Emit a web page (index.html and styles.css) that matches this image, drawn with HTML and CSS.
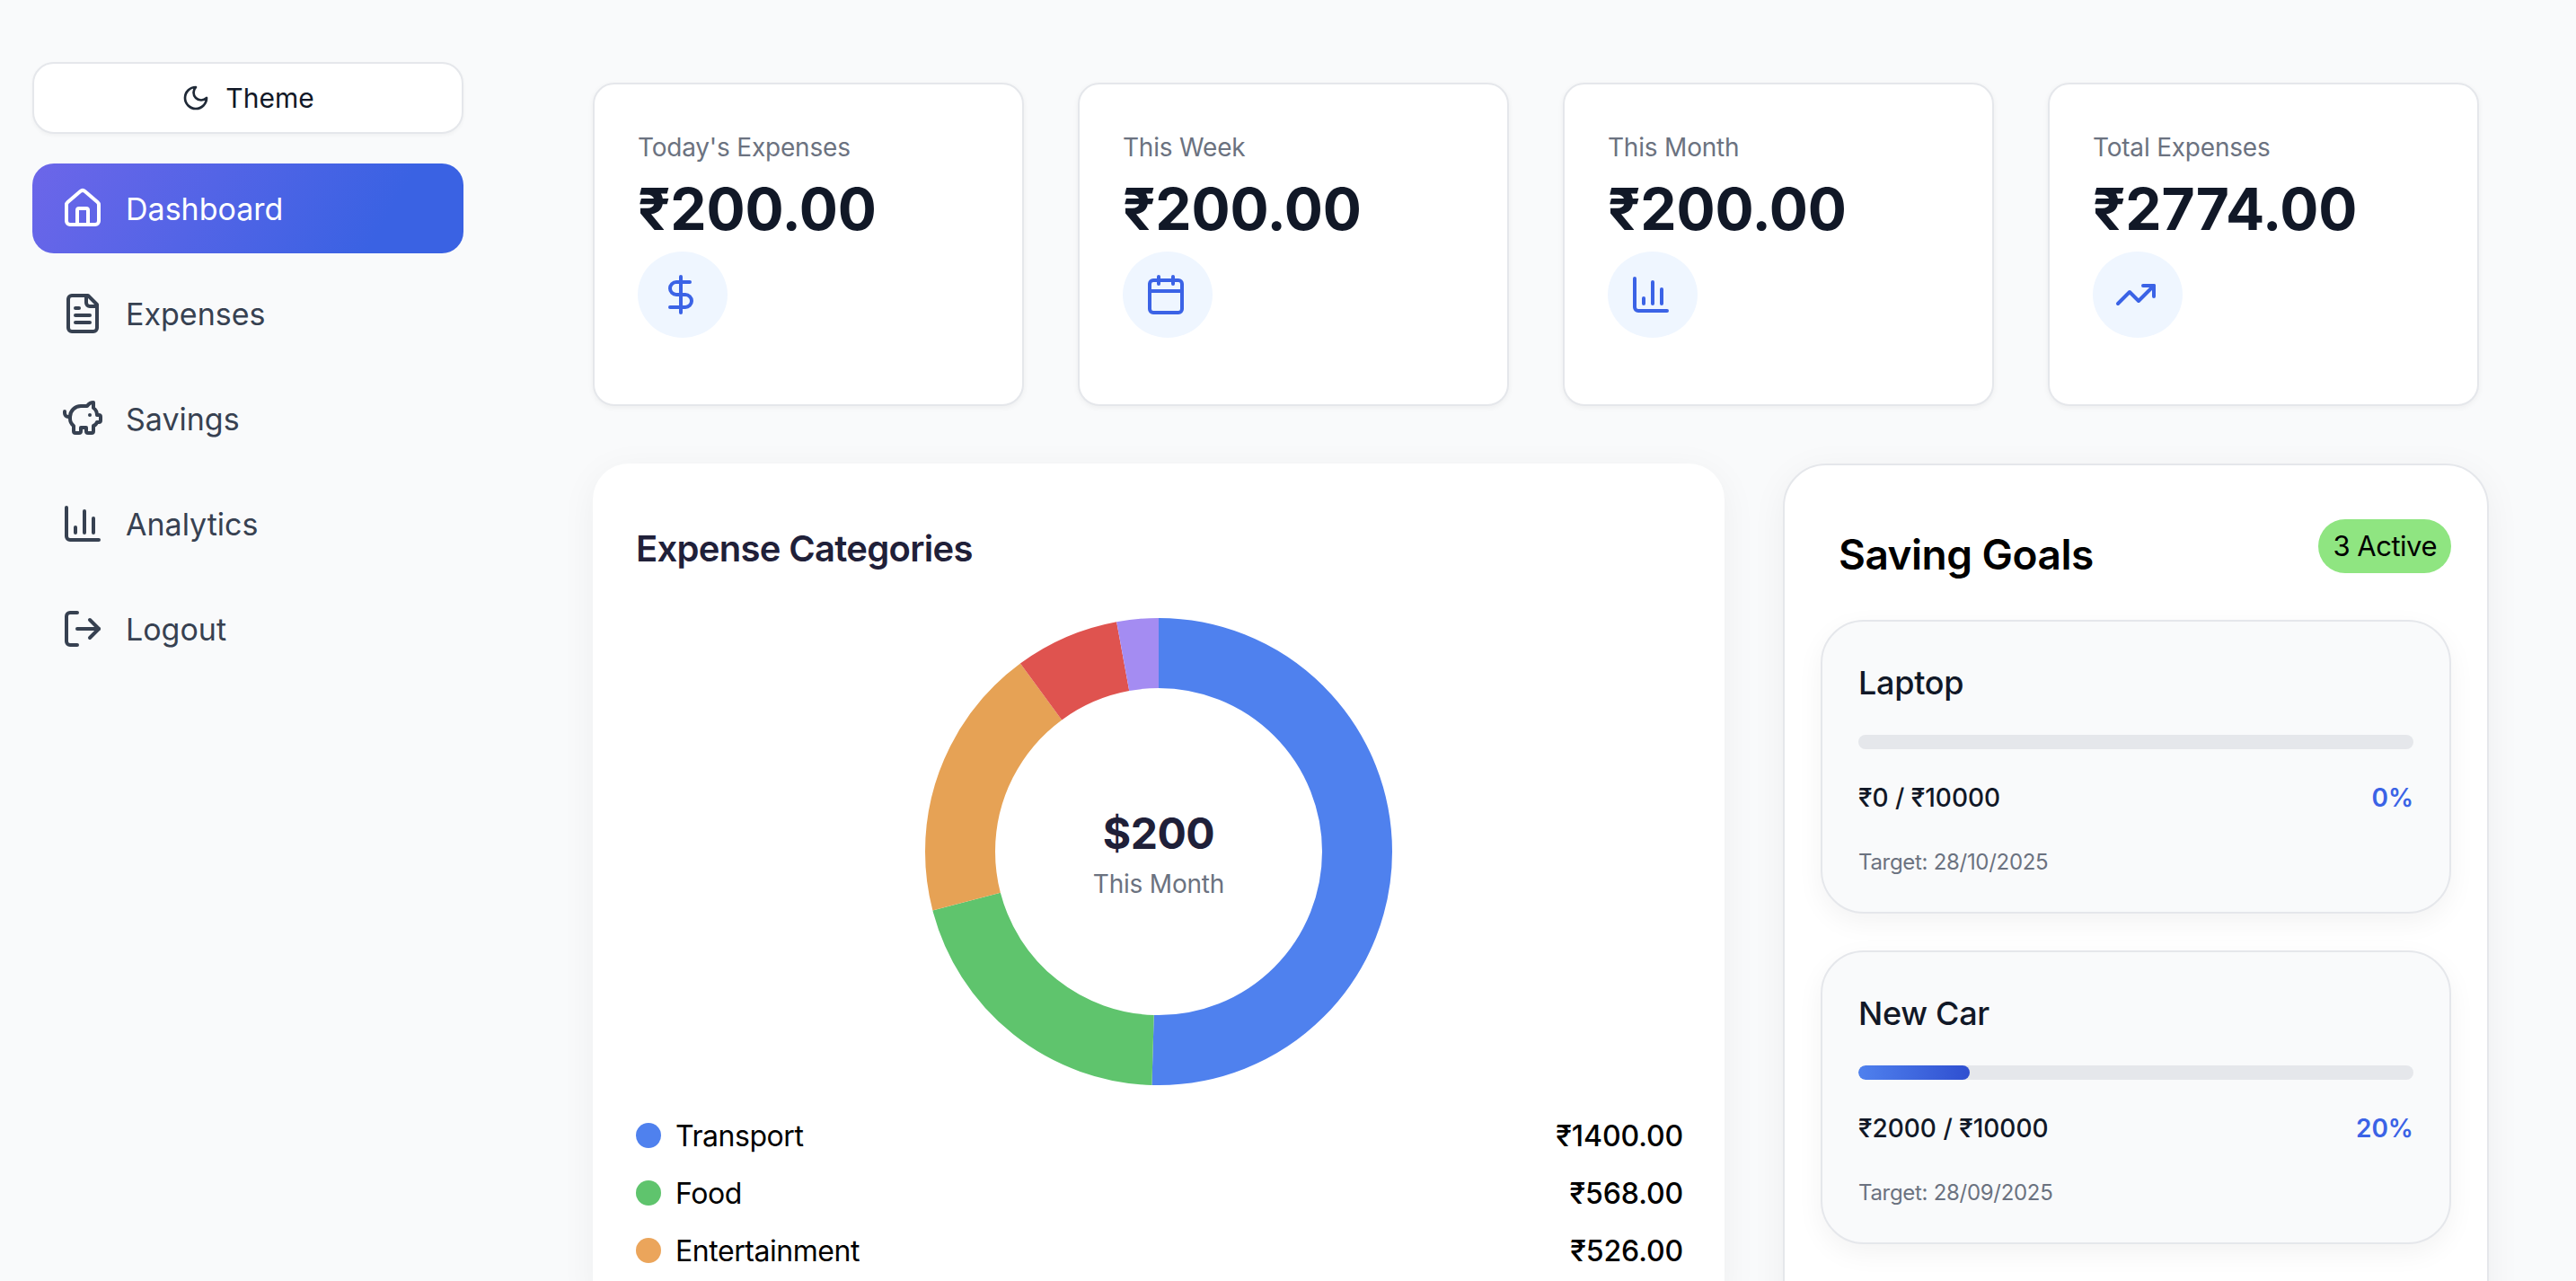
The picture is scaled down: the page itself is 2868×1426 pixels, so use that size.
FILE: index.html
```html
<!DOCTYPE html>
<html lang="en">
<head>
    <meta charset="UTF-8">
    <meta name="viewport" content="width=device-width, initial-scale=1.0">
    <title>Dashboard</title>
    <link rel="stylesheet" href="styles.css">
</head>
<body>
    <!-- Sidebar -->
    <aside class="sidebar">
        <button class="theme-button" type="button">
            <svg class="icon icon-small" viewBox="0 0 24 24"><path d="M12 3a6 6 0 0 0 9 9 9 9 0 1 1-9-9Z"/></svg>
            Theme
        </button>
        <nav class="nav">
            <a class="nav-link active" href="#">
                <svg class="icon" viewBox="0 0 24 24"><path d="M15 21v-8a1 1 0 0 0-1-1h-4a1 1 0 0 0-1 1v8"/><path d="M3 10a2 2 0 0 1 .709-1.528l7-5.999a2 2 0 0 1 2.582 0l7 5.999A2 2 0 0 1 21 10v9a2 2 0 0 1-2 2H5a2 2 0 0 1-2-2z"/></svg>
                Dashboard
            </a>
            <a class="nav-link" href="#">
                <svg class="icon" viewBox="0 0 24 24"><path d="M15 2H6a2 2 0 0 0-2 2v16a2 2 0 0 0 2 2h12a2 2 0 0 0 2-2V7Z"/><path d="M14 2v4a2 2 0 0 0 2 2h4"/><path d="M10 9H8"/><path d="M16 13H8"/><path d="M16 17H8"/></svg>
                Expenses
            </a>
            <a class="nav-link" href="#">
                <svg class="icon" viewBox="0 0 24 24"><path d="M11 17h3v2a1 1 0 0 0 1 1h2a1 1 0 0 0 1-1v-3a3.16 3.16 0 0 0 2-2h1a1 1 0 0 0 1-1v-2a1 1 0 0 0-1-1h-1a5 5 0 0 0-2-4V3a4 4 0 0 0-3.2 1.6l-.3.4H11a6 6 0 0 0-6 6v1a5 5 0 0 0 2 4v3a1 1 0 0 0 1 1h2a1 1 0 0 0 1-1z"/><path d="M16 10h.01"/><path d="M2 8v1a2 2 0 0 0 2 2h1"/></svg>
                Savings
            </a>
            <a class="nav-link" href="#">
                <svg class="icon" viewBox="0 0 24 24"><path d="M3 3v16a2 2 0 0 0 2 2h16"/><path d="M18 17V9"/><path d="M13 17V5"/><path d="M8 17v-3"/></svg>
                Analytics
            </a>
            <a class="nav-link" href="#">
                <svg class="icon" viewBox="0 0 24 24"><path d="m16 17 5-5-5-5"/><path d="M21 12H9"/><path d="M9 21H5a2 2 0 0 1-2-2V5a2 2 0 0 1 2-2h4"/></svg>
                Logout
            </a>
        </nav>
    </aside>

    <main class="main">
        <!-- Stat cards -->
        <section class="stats">
            <div class="stat-card">
                <p class="stat-label">Today's Expenses</p>
                <p class="stat-value">₹200.00</p>
                <div class="stat-icon">
                    <svg class="icon" viewBox="0 0 24 24"><path d="M12 2v20"/><path d="M17 5H9.5a3.5 3.5 0 0 0 0 7h5a3.5 3.5 0 0 1 0 7H6"/></svg>
                </div>
            </div>
            <div class="stat-card">
                <p class="stat-label">This Week</p>
                <p class="stat-value">₹200.00</p>
                <div class="stat-icon">
                    <svg class="icon" viewBox="0 0 24 24"><path d="M8 2v4"/><path d="M16 2v4"/><rect x="3" y="4" width="18" height="18" rx="2"/><path d="M3 10h18"/></svg>
                </div>
            </div>
            <div class="stat-card">
                <p class="stat-label">This Month</p>
                <p class="stat-value">₹200.00</p>
                <div class="stat-icon">
                    <svg class="icon" viewBox="0 0 24 24"><path d="M3 3v16a2 2 0 0 0 2 2h16"/><path d="M18 17V9"/><path d="M13 17V5"/><path d="M8 17v-3"/></svg>
                </div>
            </div>
            <div class="stat-card">
                <p class="stat-label">Total Expenses</p>
                <p class="stat-value">₹2774.00</p>
                <div class="stat-icon">
                    <svg class="icon" viewBox="0 0 24 24"><path d="M22 7l-8.5 8.5-5-5L2 17"/><path d="M16 7h6v6"/></svg>
                </div>
            </div>
        </section>

        <section class="panels">
            <!-- Expense categories -->
            <div class="panel categories">
                <h2 class="categories-title">Expense Categories</h2>
                <div class="donut">
                    <svg class="donut-chart" viewBox="0 0 520 520">
                        <circle class="slice slice-blue" cx="260" cy="260" r="221" pathLength="2774" stroke-dasharray="1400 2774" stroke-dashoffset="0"/>
                        <circle class="slice slice-green" cx="260" cy="260" r="221" pathLength="2774" stroke-dasharray="568 2774" stroke-dashoffset="-1400"/>
                        <circle class="slice slice-orange" cx="260" cy="260" r="221" pathLength="2774" stroke-dasharray="526 2774" stroke-dashoffset="-1968"/>
                        <circle class="slice slice-red" cx="260" cy="260" r="221" pathLength="2774" stroke-dasharray="200 2774" stroke-dashoffset="-2494"/>
                        <circle class="slice slice-purple" cx="260" cy="260" r="221" pathLength="2774" stroke-dasharray="80 2774" stroke-dashoffset="-2694"/>
                    </svg>
                    <div class="donut-center">
                        <div class="donut-amount">$200</div>
                        <div class="donut-label">This Month</div>
                    </div>
                </div>
                <ul class="legend">
                    <li class="legend-row">
                        <span class="legend-name"><span class="dot dot-blue"></span>Transport</span>
                        <span class="legend-amount">₹1400.00</span>
                    </li>
                    <li class="legend-row">
                        <span class="legend-name"><span class="dot dot-green"></span>Food</span>
                        <span class="legend-amount">₹568.00</span>
                    </li>
                    <li class="legend-row">
                        <span class="legend-name"><span class="dot dot-orange"></span>Entertainment</span>
                        <span class="legend-amount">₹526.00</span>
                    </li>
                </ul>
            </div>

            <!-- Saving goals -->
            <div class="panel goals">
                <div class="goals-header">
                    <h2 class="goals-title">Saving Goals</h2>
                    <span class="badge">3 Active</span>
                </div>
                <div class="goal-card">
                    <h3 class="goal-name">Laptop</h3>
                    <div class="progress"><div class="progress-fill" style="width: 0%"></div></div>
                    <div class="goal-row">
                        <span>₹0 / ₹10000</span>
                        <span class="goal-percent">0%</span>
                    </div>
                    <p class="goal-target">Target: 28/10/2025</p>
                </div>
                <div class="goal-card">
                    <h3 class="goal-name">New Car</h3>
                    <div class="progress"><div class="progress-fill" style="width: 20%"></div></div>
                    <div class="goal-row">
                        <span>₹2000 / ₹10000</span>
                        <span class="goal-percent">20%</span>
                    </div>
                    <p class="goal-target">Target: 28/09/2025</p>
                </div>
            </div>
        </section>
    </main>
</body>
</html>
```

FILE: styles.css
```css
* {
    box-sizing: border-box;
}

html, body {
    height: 100%;
    margin: 0;
    overflow: hidden;
}

body {
    display: flex;
    align-items: flex-start;
    font-family: Inter, "Liberation Sans", sans-serif;
    background-color: #f9fafb;
    color: #111827;
}

p, h2, h3, ul {
    margin: 0;
    padding: 0;
}

.icon {
    display: block;
    width: 48px;
    height: 48px;
    flex: none;
    fill: none;
    stroke: currentColor;
    stroke-width: 2;
    stroke-linecap: round;
    stroke-linejoin: round;
}

.icon-small {
    width: 32px;
    height: 32px;
    color: #1f2937;
}

/* Sidebar */
.sidebar {
    width: 552px;
    flex: none;
    padding: 69px 36px 0;
}

.theme-button {
    display: flex;
    align-items: center;
    justify-content: center;
    gap: 17px;
    width: 100%;
    height: 80px;
    margin-bottom: 33px;
    background-color: white;
    border: 2px solid #e5e7eb;
    border-radius: 24px;
    box-shadow: 0 2px 4px rgba(0, 0, 0, 0.04);
    font-family: inherit;
    font-size: 30px;
    font-weight: 400;
    color: #111827;
}

.nav {
    display: flex;
    flex-direction: column;
    gap: 17px;
}

.nav-link {
    display: flex;
    align-items: center;
    gap: 24px;
    height: 100px;
    padding-left: 32px;
    border-radius: 24px;
    font-size: 34px;
    font-weight: 400;
    color: #374151;
    text-decoration: none;
}

.nav-link.active {
    background: linear-gradient(120deg, #6c66e9, #3a62e3 80%);
    color: white;
}

/* Main */
.main {
    flex: 1;
    padding: 92px 0 0 108px;
}

.stats {
    display: grid;
    grid-template-columns: repeat(4, 480px);
    gap: 60px;
    margin-bottom: 64px;
}

.stat-card {
    height: 360px;
    padding: 50px 48px 48px;
    background-color: white;
    border: 2px solid #e5e7eb;
    border-radius: 24px;
    box-shadow: 0 2px 6px rgba(0, 0, 0, 0.05);
}

.stat-label {
    font-size: 28px;
    line-height: 40px;
    letter-spacing: -0.2px;
    color: #6b7280;
}

.stat-value {
    margin-top: 9px;
    font-size: 64px;
    font-weight: 700;
    line-height: 80px;
    letter-spacing: -0.2px;
    color: #111827;
}

.stat-icon {
    width: 100px;
    height: 96px;
    margin-top: 7px;
    padding: 24px;
    background-color: #eff6ff;
    border-radius: 50%;
    color: #3b63e6;
}

.panels {
    display: flex;
    align-items: flex-start;
    gap: 65px;
}

.panel {
    background-color: white;
    box-shadow: 0 8px 40px rgba(0, 0, 0, 0.05);
}

/* Expense categories */
.categories {
    width: 1260px;
    padding: 65px 48px 48px;
    border-radius: 40px;
}

.categories-title {
    font-size: 40px;
    font-weight: 600;
    line-height: 60px;
    letter-spacing: -0.7px;
    color: #1f2039;
}

.donut {
    position: relative;
    width: 520px;
    height: 520px;
    margin: 47px auto 32px;
}

.donut-chart {
    display: block;
    width: 520px;
    height: 520px;
    transform: rotate(-90deg);
}

.slice {
    fill: none;
    stroke-width: 78;
}

.slice-blue { stroke: #4f81ee; }
.slice-green { stroke: #5fc46d; }
.slice-orange { stroke: #e6a255; }
.slice-red { stroke: #df534f; }
.slice-purple { stroke: #a48cf2; }

.donut-center {
    position: absolute;
    top: 212px;
    left: 0;
    width: 100%;
    text-align: center;
}

.donut-amount {
    font-size: 48px;
    font-weight: 700;
    line-height: 56px;
    letter-spacing: -0.5px;
    color: #1f2039;
}

.donut-label {
    font-size: 28px;
    line-height: 40px;
    letter-spacing: -0.2px;
    margin-top: 8px;
    color: #6b7280;
}

.legend {
    display: flex;
    flex-direction: column;
    gap: 16px;
    margin-right: -2px;
    list-style: none;
}

.legend-row {
    display: flex;
    align-items: center;
    justify-content: space-between;
    height: 48px;
    font-size: 32px;
    color: black;
}

.legend-name {
    display: flex;
    align-items: center;
    gap: 16px;
    letter-spacing: -0.45px;
}

.legend-amount {
    font-weight: 500;
    letter-spacing: -0.1px;
}

.dot {
    width: 28px;
    height: 28px;
    border-radius: 50%;
}

.dot-blue { background-color: #4f81ee; }
.dot-green { background-color: #5fc46d; }
.dot-orange { background-color: #eba55b; }

/* Saving goals */
.goals {
    width: 786px;
    padding: 60px 40px;
    border: 2px solid #e5e7eb;
    border-radius: 48px;
}

.goals-header {
    display: flex;
    align-items: flex-start;
    justify-content: space-between;
    height: 112px;
    padding-left: 20px;
}

.goals-title {
    margin-top: 7px;
    font-size: 46px;
    font-weight: 600;
    line-height: 64px;
    letter-spacing: -0.5px;
    color: black;
}

.badge {
    padding: 0 16px;
    background-color: #8fe581;
    border-radius: 30px;
    font-size: 31px;
    line-height: 60px;
    letter-spacing: -0.5px;
    color: black;
}

.goal-card {
    height: 327px;
    margin-bottom: 41px;
    padding: 40px;
    background-color: #f9fafb;
    border: 2px solid #e5e7eb;
    border-radius: 48px;
    box-shadow: 0 10px 30px rgba(0, 0, 0, 0.05);
}

.goal-name {
    font-size: 36px;
    font-weight: 500;
    line-height: 56px;
    letter-spacing: -0.3px;
    color: #111827;
}

.progress {
    height: 16px;
    margin-top: 30px;
    background-color: #e5e7eb;
    border-radius: 8px;
    overflow: hidden;
}

.progress-fill {
    height: 100%;
    background: linear-gradient(90deg, #4f81ee, #2f4fd0);
    border-radius: 8px;
}

.goal-row {
    display: flex;
    justify-content: space-between;
    margin-top: 34px;
    font-size: 28px;
    font-weight: 500;
    line-height: 40px;
    color: #111827;
}

.goal-percent {
    color: #3b63e6;
    font-weight: 600;
}

.goal-target {
    margin-top: 36px;
    font-size: 24px;
    line-height: 32px;
    letter-spacing: -0.3px;
    color: #6b7280;
}
```
